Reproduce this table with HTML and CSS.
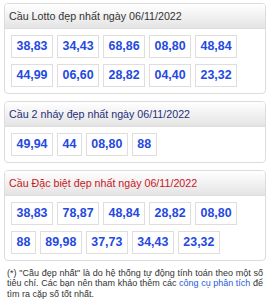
FILE: index.html
```html
<!DOCTYPE html>
<html>
<head>
<meta charset="utf-8">
<link rel="stylesheet" href="styles.css">
</head>
<body>
<div class="card">
  <div class="card-head head-grey">Cầu Lotto đẹp nhất ngày 06/11/2022</div>
  <div class="card-body">
    <span class="num">38,83</span><span class="num">34,43</span><span class="num">68,86</span><span class="num">08,80</span><span class="num">48,84</span>
    <span class="num">44,99</span><span class="num">06,60</span><span class="num">28,82</span><span class="num">04,40</span><span class="num">23,32</span>
  </div>
</div>
<div class="card">
  <div class="card-head head-navy">Cầu 2 nháy đẹp nhất ngày 06/11/2022</div>
  <div class="card-body">
    <span class="num">49,94</span><span class="num">44</span><span class="num">08,80</span><span class="num">88</span>
  </div>
</div>
<div class="card">
  <div class="card-head head-red">Cầu Đặc biệt đẹp nhất ngày 06/11/2022</div>
  <div class="card-body">
    <span class="num">38,83</span><span class="num">78,87</span><span class="num">48,84</span><span class="num">28,82</span><span class="num">08,80</span>
    <span class="num">88</span><span class="num">89,98</span><span class="num">37,73</span><span class="num">34,43</span><span class="num">23,32</span>
  </div>
</div>
<div class="note">
  <span class="note-line">(*) "Cầu đẹp nhất" là do hệ thống tự động tính toán theo một số</span>
  <span class="note-line">tiêu chí. Các bạn nên tham khảo thêm các <a class="note-link" href="#">công cụ phân tích</a> để</span>
  <span class="note-end">tìm ra cặp số tốt nhất.</span>
</div>
</body>
</html>
```
FILE: styles.css
```css
html, body {
  margin: 0;
  padding: 0;
  background: #fff;
}
body {
  padding: 3px 4px 0 4px;
  font-family: "Liberation Sans", Arial, sans-serif;
}
.card {
  border: 1px solid #dcdcdc;
  border-radius: 4px;
  margin-bottom: 7px;
  overflow: hidden;
}
.card-head {
  height: 25px;
  box-sizing: border-box;
  border-bottom: 1px solid #dcdcdc;
  background: linear-gradient(#ffffff, #e4e4e4);
  padding-left: 4px;
  font-size: 10.7px;
  line-height: 25px;
}
.head-grey { color: #333; }
.head-navy { color: #1f2f7a; }
.head-red { color: #c8161d; }
.card-body {
  padding: 6px 6px 6px 6px;
  display: flex;
  flex-wrap: wrap;
  column-gap: 4px;
  row-gap: 6px;
}
.num {
  display: block;
  border: 1px solid #dedede;
  padding: 3px 4.5px;
  line-height: 15px;
  font-size: 12.4px;
  font-weight: bold;
  color: #2549e0;
}
.note {
  margin: 2px 3px 0 3px;
  font-size: 9px;
  line-height: 10.4px;
  color: #333;
}
.note-line {
  display: block;
  text-align: justify;
  text-align-last: justify;
}
.note-end {
  display: block;
}
.note-link {
  color: #1f5bd6;
  text-decoration: none;
}
```
